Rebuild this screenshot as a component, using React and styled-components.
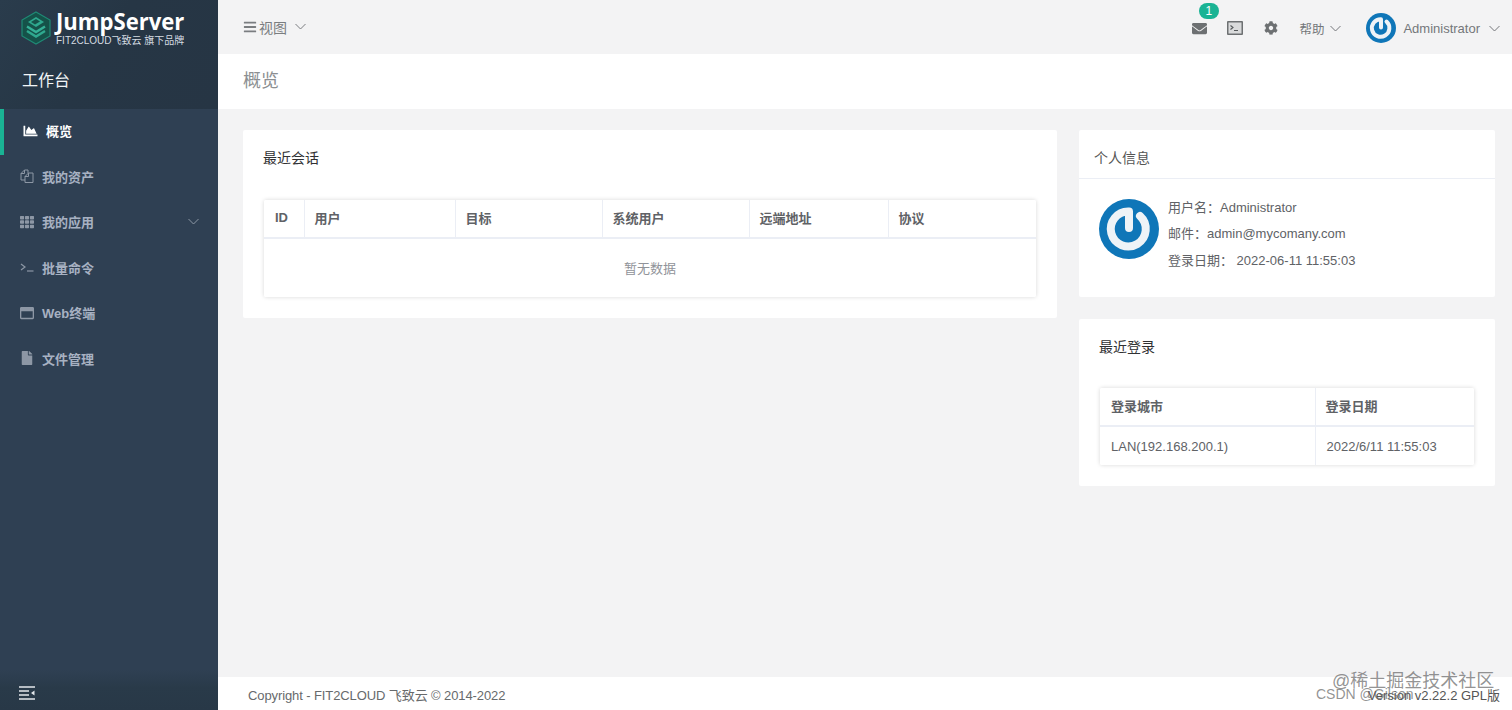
import styled, { createGlobalStyle } from 'styled-components'
import { FaBars, FaChartArea, FaCog, FaEnvelope, FaFile, FaRegWindowMaximize, FaTh } from 'react-icons/fa'

const GlobalStyle = createGlobalStyle`
  html, body {
    margin: 0;
    padding: 0;
    height: 100%;
    overflow: hidden;
  }
  body {
    font-family: "Liberation Sans", "Noto Sans CJK SC", sans-serif;
    font-size: 13px;
    color: #676a6c;
    background: #f3f3f4;
  }
  * {
    box-sizing: border-box;
  }
`

const Layout = styled.div`
  width: 1512px;
  height: 710px;
  display: flex;
`

const Sidebar = styled.aside`
  width: 218px;
  flex-shrink: 0;
  height: 100%;
  background: #2f4053;
  display: flex;
  flex-direction: column;
`

const SidebarHead = styled.div`
  height: 109px;
  background: linear-gradient(125deg, #2a3c4c 0%, #263645 45%, #263544 100%);
  display: flex;
  flex-direction: column;
`

const LogoRow = styled.div`
  height: 54px;
  padding: 11px 0 0 21px;
  display: flex;
  gap: 5px;
`

const LogoText = styled.div`
  display: flex;
  flex-direction: column;
  margin-top: -3px;
  color: #fff;
`

const LogoName = styled.span`
  font-family: "Open Sans", "Liberation Sans", sans-serif;
  font-size: 24px;
  font-weight: 700;
  line-height: 26px;
  transform: scaleX(0.92);
  transform-origin: left;
  white-space: nowrap;
`

const LogoSub = styled.span`
  font-size: 10px;
  line-height: 11px;
  margin-top: 1px;
  color: #d5dce2;
  white-space: nowrap;
`

const Workbench = styled.div`
  padding: 6px 0 0 22px;
  font-size: 16px;
  line-height: 42px;
  color: #f2f5f7;
`

const Menu = styled.nav`
  display: flex;
  flex-direction: column;
`

const MenuItem = styled.div`
  height: 45.5px;
  display: flex;
  align-items: center;
  gap: 8px;
  padding-left: ${p => (p.$active ? '19px' : '20px')};
  padding-bottom: 2px;
  border-left: ${p => (p.$active ? '4px solid #1ab394' : 'none')};
  color: ${p => (p.$active ? '#fff' : '#a7b1c2')};
  font-size: 13px;
  font-weight: 700;

  & > svg:first-child {
    width: ${p => (p.$active ? '15px' : '14px')};
    height: 14px;
    flex-shrink: 0;
    color: ${p => (p.$active ? '#fff' : '#8d97a5')};
  }
`

const MenuArrow = styled.span`
  margin-left: auto;
  margin-right: 19px;
  display: flex;
  color: #8d97a5;
`

const SidebarFoot = styled.div`
  margin-top: auto;
  height: 40px;
  background: linear-gradient(#2f4053 0%, #293a49 45%, #283847 100%);
  display: flex;
  align-items: center;
  padding: 6px 0 0 19px;
  color: #e4e8ec;
`

const Main = styled.main`
  flex: 1;
  min-width: 0;
  display: flex;
  flex-direction: column;
`

const TopBar = styled.header`
  height: 54px;
  flex-shrink: 0;
  display: flex;
  align-items: center;
  padding: 2px 12px 0 25px;
  color: #6f7275;
`

const ViewMenu = styled.div`
  display: flex;
  align-items: center;
  gap: 2px;
  margin-top: -3px;
  font-size: 14px;
  color: #7a7d80;
`

const ViewCaret = styled.span`
  display: flex;
  margin-left: 6px;
`

const TopActions = styled.div`
  margin-left: auto;
  display: flex;
  align-items: center;
`

const IconButton = styled.span`
  width: 35.5px;
  display: flex;
  justify-content: center;
  color: #6d7072;
  position: relative;
`

const Badge = styled.span`
  position: absolute;
  top: -18px;
  left: 17px;
  width: 20px;
  height: 16px;
  border-radius: 9px;
  background: #1ab394;
  color: #fff;
  font-size: 12px;
  line-height: 16px;
  text-align: center;
`

const DropLabel = styled.span`
  display: flex;
  align-items: center;
  color: #74777a;
`

const HelpMenu = styled(DropLabel)`
  margin-left: 11px;
  margin-right: 25px;
  gap: 6px;
  font-size: 12.5px;
`

const UserMenu = styled(DropLabel)`
  gap: 7px;
  font-size: 13px;
`

const UserCaret = styled.span`
  display: flex;
  margin-left: 2px;
`

const PageHeading = styled.div`
  height: 55px;
  flex-shrink: 0;
  background: #fff;
  padding: 0 25px 6px;
  display: flex;
  align-items: center;
  font-size: 18px;
  color: #8c8f92;
`

const Content = styled.div`
  flex: 1;
  min-height: 0;
  padding: 21px 17px 0 25px;
  display: flex;
  align-items: flex-start;
  gap: 22px;
`

const LeftColumn = styled.div`
  width: 814px;
`

const RightColumn = styled.div`
  width: 416px;
  display: flex;
  flex-direction: column;
  gap: 22px;
`

const Card = styled.section`
  background: #fff;
  border-radius: 2px;
`

const TableCard = styled(Card)`
  padding: 20px 21px 21px;
`

const CardTitle = styled.div`
  font-size: 14px;
  line-height: 16px;
  color: #303133;
  margin-left: -1px;
  margin-bottom: ${p => p.$gap}px;
`

const InfoHead = styled.div`
  height: 49px;
  padding: 5px 0 0 15px;
  border-bottom: 1px solid #ebeef5;
  display: flex;
  align-items: center;
  font-size: 14px;
  color: #555;
`

const InfoBody = styled.div`
  height: 118px;
  padding: 20px 0 0 20px;
  display: flex;
  gap: 9px;
`

const InfoLines = styled.div`
  display: flex;
  flex-direction: column;
  margin-top: -4px;
`

const InfoLine = styled.div`
  font-size: 13px;
  line-height: 26.3px;
  color: #606266;
  white-space: nowrap;
`

const TableFrame = styled.div`
  border-radius: 2px;
  overflow: hidden;
  box-shadow: 0 0 4px rgba(0, 0, 0, 0.16);
`

const Table = styled.table`
  width: 100%;
  border-collapse: collapse;
  table-layout: fixed;
  background: #fff;
`

const Th = styled.th`
  width: ${p => (p.$w ? `${p.$w}px` : 'auto')};
  height: 38px;
  padding: 0 10px 3px 10px;
  text-align: left;
  font-size: 13px;
  font-weight: 700;
  color: #606266;
  border-right: 1px solid #ebeef5;
  border-bottom: 2px solid #ebeef5;

  &:first-child {
    padding-left: 11px;
  }

  &:last-child {
    border-right: none;
  }
`

const Td = styled.td`
  height: 39px;
  padding: 0 10px 0 11px;
  font-size: 13px;
  color: #606266;
  border-right: 1px solid #ebeef5;

  &:last-child {
    border-right: none;
  }
`

const EmptyCell = styled.td`
  height: 59px;
  padding-bottom: 3px;
  text-align: center;
  font-size: 13px;
  color: #909399;
`

const Footer = styled.footer`
  height: 33px;
  flex-shrink: 0;
  background: #fff;
  padding: 1px 12px 0 30px;
  display: flex;
  align-items: center;
  justify-content: space-between;
  font-size: 13px;
  color: #676a6c;
  position: relative;
`

const Copyright = styled.span`
  letter-spacing: -0.1px;
`

const Version = styled.span`
  color: #555;
`

// site watermarks burned over the bottom right corner of the page
const Watermark = styled.span`
  position: absolute;
  left: ${p => p.$left}px;
  top: ${p => p.$top}px;
  font-size: ${p => p.$size}px;
  color: rgba(100, 100, 100, 0.7);
  white-space: nowrap;
`

function Caret() {
  return (
    <svg width="11" height="7" viewBox="0 0 11 7">
      <path d="M.5 1l5 5 5-5" fill="none" stroke="currentColor" strokeWidth="1" />
    </svg>
  )
}

function JumpLogo() {
  return (
    <svg width="30" height="34" viewBox="0 0 30 34">
      <path d="M15 1 29 9v16l-14 8-14-8V9z" fill="#155249" stroke="#1f8a75" strokeWidth="1.2" />
      <path d="M7 11l8-5 8 5-8 5z" fill="#2fa98f" />
      <path d="M10 11l5-3 4 2.5-5 3z" fill="#155249" />
      <path d="M6 15.500l9 5.500 9-5.500" fill="none" stroke="#35b197" strokeWidth="2.4" />
      <path d="M6 20l9 5.500 9-5.500" fill="none" stroke="#2fa98f" strokeWidth="2.4" />
    </svg>
  )
}

// gravatar style default picture: open ring whose end turns down to the centre
function Avatar({ size }) {
  return (
    <svg width={size} height={size} viewBox="0 0 60 60">
      <circle cx="30" cy="30" r="30" fill="#0f76b8" />
      <path
        d="M41 17A17.500 17.500 0 1 1 30 12.500V29"
        fill="none"
        stroke="#eef3f7"
        strokeWidth="8"
        strokeLinecap="round"
        strokeLinejoin="round"
      />
    </svg>
  )
}

function FilesIcon() {
  return (
    <svg viewBox="0 0 14 14">
      <path
        d="M8 4V1H4.500L1 4.500V11h4M4.500 1v3.500H1M5 7.500L8.500 4H13v9.500H5zM8.500 4v3.500H5"
        fill="none"
        stroke="currentColor"
        strokeWidth="1"
      />
    </svg>
  )
}

function TerminalPrompt() {
  return (
    <svg viewBox="0 0 14 14">
      <path d="M1 4l4 3-4 3" fill="none" stroke="currentColor" strokeWidth="1.2" />
      <path d="M7 11h6.500" stroke="currentColor" strokeWidth="1.2" />
    </svg>
  )
}

function TerminalBox() {
  return (
    <svg width="16" height="14" viewBox="0 0 16 14">
      <rect x="0" y="0" width="16" height="14" rx="1" fill="#6d7072" />
      <rect x="1.500" y="1.500" width="13" height="11" fill="#d9dadb" />
      <path d="M3.500 4.500l2.500 2-2.500 2M7 9.500h4" fill="none" stroke="#55585a" strokeWidth="1.100" />
    </svg>
  )
}

function CollapseIcon() {
  return (
    <svg width="16" height="14" viewBox="0 0 16 14">
      <path d="M0 1h16M0 5h10M0 9h10M0 13h16" stroke="currentColor" strokeWidth="1.300" />
      <path d="M15.500 4.500v5L12 7z" fill="currentColor" />
    </svg>
  )
}

const menuItems = [
  { label: '我的资产', icon: <FilesIcon /> },
  { label: '我的应用', icon: <FaTh />, arrow: true },
  { label: '批量命令', icon: <TerminalPrompt /> },
  { label: 'Web终端', icon: <FaRegWindowMaximize /> },
  { label: '文件管理', icon: <FaFile /> },
]

const sessionColumns = [
  { label: 'ID', width: 40 },
  { label: '用户', width: 151 },
  { label: '目标', width: 147 },
  { label: '系统用户', width: 147 },
  { label: '远端地址', width: 139 },
  { label: '协议', width: 148 },
]

export default function App() {
  return (
    <Layout>
      <GlobalStyle />
      <Sidebar>
        <SidebarHead>
          <LogoRow>
            <JumpLogo />
            <LogoText>
              <LogoName>JumpServer</LogoName>
              <LogoSub>FIT2CLOUD飞致云 旗下品牌</LogoSub>
            </LogoText>
          </LogoRow>
          <Workbench>工作台</Workbench>
        </SidebarHead>
        <Menu>
          <MenuItem $active>
            <FaChartArea />
            概览
          </MenuItem>
          {menuItems.map(item => (
            <MenuItem key={item.label}>
              {item.icon}
              {item.label}
              {item.arrow && (
                <MenuArrow>
                  <Caret />
                </MenuArrow>
              )}
            </MenuItem>
          ))}
        </Menu>
        <SidebarFoot>
          <CollapseIcon />
        </SidebarFoot>
      </Sidebar>
      <Main>
        <TopBar>
          <ViewMenu>
            <FaBars size={14} />
            视图
            <ViewCaret>
              <Caret />
            </ViewCaret>
          </ViewMenu>
          <TopActions>
            <IconButton>
              <FaEnvelope size={15} />
              <Badge>1</Badge>
            </IconButton>
            <IconButton>
              <TerminalBox />
            </IconButton>
            <IconButton>
              <FaCog size={14} />
            </IconButton>
            <HelpMenu>
              帮助
              <Caret />
            </HelpMenu>
            <UserMenu>
              <Avatar size={30} />
              Administrator
              <UserCaret>
                <Caret />
              </UserCaret>
            </UserMenu>
          </TopActions>
        </TopBar>
        <PageHeading>概览</PageHeading>
        <Content>
          <LeftColumn>
            <TableCard>
              <CardTitle $gap={34}>最近会话</CardTitle>
              <TableFrame>
                <Table>
                  <thead>
                    <tr>
                      {sessionColumns.map(col => (
                        <Th key={col.label} $w={col.width}>{col.label}</Th>
                      ))}
                    </tr>
                  </thead>
                  <tbody>
                    <tr>
                      <EmptyCell colSpan={6}>暂无数据</EmptyCell>
                    </tr>
                  </tbody>
                </Table>
              </TableFrame>
            </TableCard>
          </LeftColumn>
          <RightColumn>
            <Card>
              <InfoHead>个人信息</InfoHead>
              <InfoBody>
                <Avatar size={60} />
                <InfoLines>
                  <InfoLine>用户名：Administrator</InfoLine>
                  <InfoLine>邮件：admin@mycomany.com</InfoLine>
                  <InfoLine>登录日期： 2022-06-11 11:55:03</InfoLine>
                </InfoLines>
              </InfoBody>
            </Card>
            <TableCard>
              <CardTitle $gap={33}>最近登录</CardTitle>
              <TableFrame>
                <Table>
                  <thead>
                    <tr>
                      <Th $w={215}>登录城市</Th>
                      <Th>登录日期</Th>
                    </tr>
                  </thead>
                  <tbody>
                    <tr>
                      <Td>LAN(192.168.200.1)</Td>
                      <Td>2022/6/11 11:55:03</Td>
                    </tr>
                  </tbody>
                </Table>
              </TableFrame>
            </TableCard>
          </RightColumn>
        </Content>
        <Footer>
          <Copyright>Copyright - FIT2CLOUD 飞致云 © 2014-2022</Copyright>
          <Version>Version v2.22.2 GPL版</Version>
          <Watermark $left={1114} $top={-11} $size={18}>@稀土掘金技术社区</Watermark>
          <Watermark $left={1098} $top={9} $size={14}>CSDN @Gilson</Watermark>
        </Footer>
      </Main>
    </Layout>
  )
}
